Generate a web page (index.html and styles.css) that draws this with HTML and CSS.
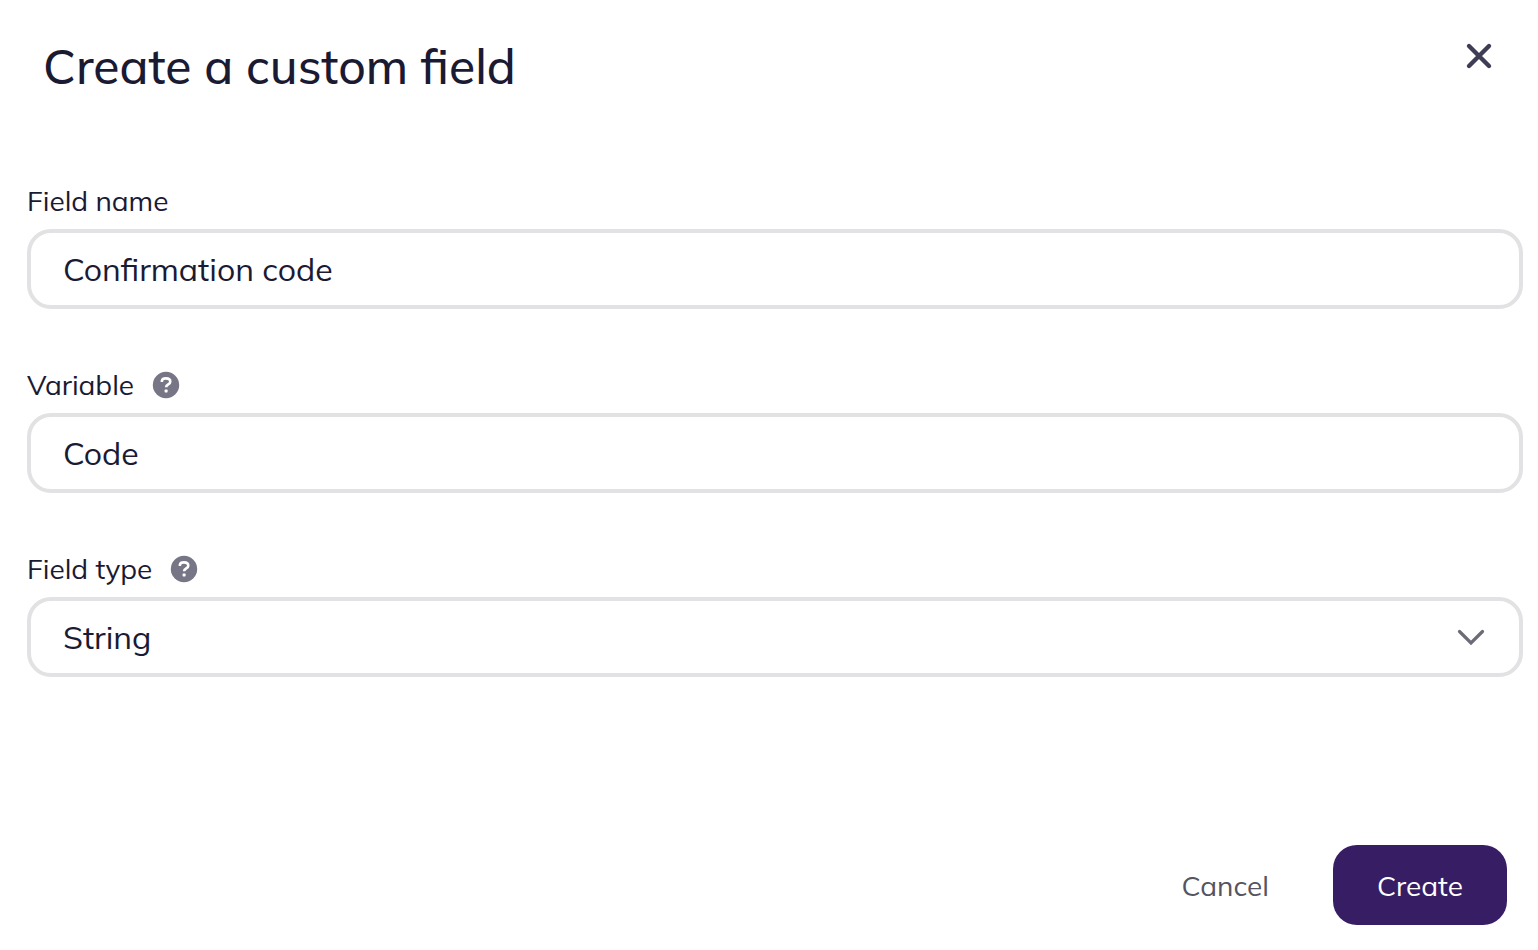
FILE: index.html
```html
<!DOCTYPE html>
<html lang="en">
<head>
<meta charset="utf-8">
<meta name="viewport" content="width=device-width, initial-scale=1">
<title>Create a custom field</title>
<link rel="stylesheet" href="styles.css">
</head>
<body>
<main class="dialog" role="dialog" aria-labelledby="dialog-title">
  <header class="dialog-header">
    <h1 class="dialog-title" id="dialog-title">Create a custom field</h1>
    <button class="close-button" type="button" aria-label="Close">
      <svg width="28" height="28" viewBox="0 0 28 28" fill="none" stroke="currentColor" stroke-width="4.400" stroke-linecap="round" aria-hidden="true"><path d="M4 4 24 24M24 4 4 24"/></svg>
    </button>
  </header>
  <form class="form">
    <div class="field">
      <div class="field-heading"><label for="field-name">Field name</label></div>
      <input class="control" id="field-name" type="text" value="Confirmation code">
    </div>
    <div class="field">
      <div class="field-heading">
        <label for="variable">Variable</label>
        <button class="help-button" type="button" aria-label="Help on variable">
          <svg width="28" height="28" viewBox="0 0 28 28" fill="none" aria-hidden="true"><circle cx="14" cy="14" r="13.2" fill="#777686"/><path d="M9.9 11V9.8C10.2 8 11.8 7.4 14 7.4c2.5 0 4.3 1.300 4.300 3.300 0 3-4.200 2.500-4.200 5.600" stroke="#fff" stroke-width="2.600"/><rect x="12.600" y="18.600" width="3" height="2.800" rx=".6" fill="#fff"/></svg>
        </button>
      </div>
      <input class="control" id="variable" type="text" value="Code">
    </div>
    <div class="field">
      <div class="field-heading">
        <label for="field-type">Field type</label>
        <button class="help-button" type="button" aria-label="Help on field type">
          <svg width="28" height="28" viewBox="0 0 28 28" fill="none" aria-hidden="true"><circle cx="14" cy="14" r="13.2" fill="#777686"/><path d="M9.9 11V9.8C10.2 8 11.8 7.4 14 7.4c2.5 0 4.3 1.300 4.300 3.300 0 3-4.200 2.500-4.200 5.600" stroke="#fff" stroke-width="2.600"/><rect x="12.600" y="18.600" width="3" height="2.800" rx=".6" fill="#fff"/></svg>
        </button>
      </div>
      <div class="select-wrap">
        <select class="control" id="field-type"><option>String</option></select>
        <svg class="chevron" width="32" height="32" viewBox="0 0 32 32" fill="none" stroke="#6d6b76" stroke-width="3.200" stroke-linecap="round" stroke-linejoin="miter" aria-hidden="true"><path d="M4.500 10.500 16 22 27.500 10.500"/></svg>
      </div>
    </div>
    <footer class="actions">
      <button class="button" type="button">Cancel</button>
      <button class="button button-primary" type="submit">Create</button>
    </footer>
  </form>
</main>
</body>
</html>
```
FILE: styles.css
```css
* {
  box-sizing: border-box;
}

body {
  margin: 0;
  background: #fff;
  color: #1b1a33;
  font-family: Mulish, Muli, Lato, sans-serif;
}

button,
input,
select {
  font: inherit;
  color: inherit;
}

.dialog {
  padding: 36px 15px 24px 27px;
}

.dialog-header {
  display: flex;
  justify-content: space-between;
  align-items: flex-start;
  padding: 0 24px 0 16px;
}

.dialog-title {
  margin: 0;
  font-size: 48px;
  font-weight: 500;
  line-height: 60px;
}

.close-button,
.help-button {
  display: flex;
  padding: 0;
  border: 0;
  background: none;
  color: #3f3d56;
  cursor: pointer;
}

.close-button {
  padding: 6px;
}

.form {
  display: grid;
  gap: 58px;
  margin-top: 87px;
}

.field {
  display: grid;
  gap: 10px;
}

.field-heading {
  display: flex;
  align-items: center;
  gap: 18px;
  font-size: 28px;
  line-height: 36px;
}

.control {
  display: block;
  width: 100%;
  height: 80px;
  padding: 0 32px;
  border: 4px solid #e2e2e5;
  border-radius: 24px;
  background: #fff;
  font-size: 32px;
  appearance: none;
}

.select-wrap {
  position: relative;
}

.chevron {
  position: absolute;
  top: 24px;
  right: 36px;
  pointer-events: none;
}

.actions {
  display: flex;
  justify-content: flex-end;
  gap: 20px;
  margin-top: 110px;
  padding-right: 16px;
}

.button {
  height: 80px;
  padding: 0 44px;
  border: 0;
  border-radius: 24px;
  background: none;
  color: #55545f;
  font-size: 28px;
  cursor: pointer;
}

.button-primary {
  background: #371d63;
  color: #fff;
}
```
